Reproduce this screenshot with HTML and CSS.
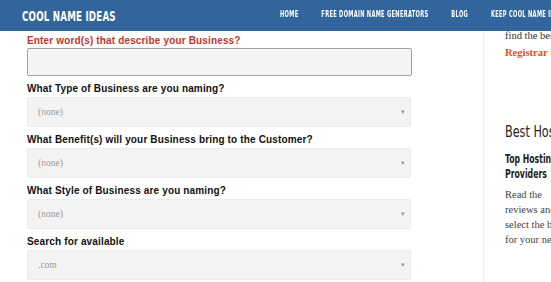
FILE: index.html
```html
<!DOCTYPE html>
<html lang="en">
<head>
    <meta charset="UTF-8">
    <meta name="viewport" content="width=device-width, initial-scale=1.0">
    <title>Cool Name Ideas</title>
    <link rel="stylesheet" href="styles.css">
</head>
<body>

    <header class="topbar">
        <a class="logo" href="#">COOL NAME IDEAS</a>
        <nav class="menu">
            <a href="#">HOME</a>
            <a href="#">FREE DOMAIN NAME GENERATORS</a>
            <a href="#">BLOG</a>
            <a href="#">KEEP COOL NAME IDEAS FREE</a>
        </nav>
    </header>

    <div class="page">
        <main class="content">
            <form class="namer">
                <label class="first">Enter word(s) that describe your Business?</label>
                <input type="text" class="words">

                <label>What Type of Business are you naming?</label>
                <div class="pick"><span>(none)</span><i>&#9662;</i></div>

                <label>What Benefit(s) will your Business bring to the Customer?</label>
                <div class="pick"><span>(none)</span><i>&#9662;</i></div>

                <label>What Style of Business are you naming?</label>
                <div class="pick"><span>(none)</span><i>&#9662;</i></div>

                <label>Search for available</label>
                <div class="pick"><span>.com</span><i>&#9662;</i></div>
            </form>
        </main>

        <aside class="sidebar">
            <p class="intro">find the best<br><a href="#">Registrar</a> for your</p>

            <h3>Best Hosting</h3>
            <div class="card">
                <h4>Top Hosting<br>Providers</h4>
                <p>Read the<br>reviews and<br>select the best<br>for your next project.</p>
            </div>
        </aside>
    </div>

</body>
</html>
```

FILE: styles.css
```css
body { margin: 0; background: white; font-family: "Liberation Sans", Arial, sans-serif; overflow: hidden; }
.topbar { position: fixed; top: 0; left: 0; right: 0; height: 31px; background: #31659b; display: flex; align-items: center; z-index: 2; white-space: nowrap; }
.logo { display: inline-block; margin-left: 22px; color: white; text-decoration: none; font-family: "DejaVu Sans Condensed", sans-serif; font-weight: bold; font-size: 14px; letter-spacing: 0.3px; transform: scaleX(0.69); transform-origin: left center; }
.menu { display: flex; position: absolute; left: 280px; top: 10px; gap: 32px; transform: scaleX(0.715); transform-origin: left center; }
.menu a { color: white; text-decoration: none; font-family: "DejaVu Sans Condensed", sans-serif; font-weight: bold; font-size: 8px; letter-spacing: 0.4px; }

.page { display: flex; padding-top: 31px; height: 251px; }
.content { flex-shrink: 0; width: 456px; padding-left: 27px; border-right: 1px solid #eeeeee; }
.namer label { display: block; font-weight: bold; font-size: 10px; letter-spacing: 0.15px; line-height: 12px; margin-top: 7px; margin-bottom: 2px; color: #111; }
.namer label.first { color: #c83232; margin-top: 4px; margin-bottom: 1px; }
.words { display: block; box-sizing: border-box; width: 385px; height: 28px; margin: 0 0 1px; border: 1px solid #a3a3a3; border-radius: 2px; background: #f4f4f4; }
.pick { box-sizing: border-box; width: 384px; height: 30px; display: flex; align-items: center; justify-content: space-between; padding: 0 5px 0 10px; background: #f3f3f3; border: 1px solid #ececec; border-radius: 2px; font-family: "Liberation Serif", serif; font-size: 9.5px; color: #9a9a9a; }
.pick i { font-style: normal; font-size: 7px; color: #999; }

.sidebar { flex: 1; min-width: 0; overflow: hidden; padding-left: 21px; font-family: "Liberation Serif", serif; color: #333; white-space: nowrap; }
.intro { margin: -4px 0 0; font-size: 10.5px; line-height: 17px; }
.intro a { color: #d9541e; font-weight: bold; text-decoration: none; }
.sidebar h3 { display: inline-block; margin: 61px 0 0; font-family: "DejaVu Sans Condensed", sans-serif; font-weight: normal; font-size: 16px; line-height: 20px; color: #222; transform: scaleX(0.78); transform-origin: left center; }
.card { width: 62px; }
.card h4 { display: inline-block; margin: 10px 0 0; font-family: "DejaVu Sans Condensed", sans-serif; font-size: 12px; line-height: 15px; color: #222; transform: scaleX(0.72); transform-origin: left center; }
.card p { margin: 5px 0 0; font-size: 10.5px; line-height: 15px; color: #444; }
```
